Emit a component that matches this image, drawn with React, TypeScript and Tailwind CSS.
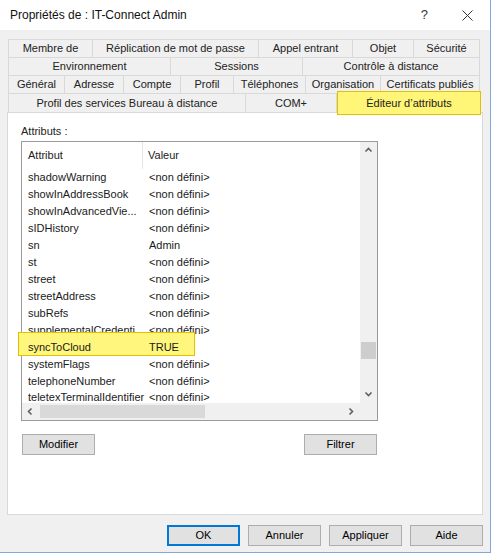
import React from "react"

type Tab = { label: string; w: string; selected?: boolean }

const tabRows: Tab[][] = [
  [
    { label: "Membre de", w: "w-[84px]" },
    { label: "Réplication de mot de passe", w: "w-[166px]" },
    { label: "Appel entrant", w: "w-[94px]" },
    { label: "Objet", w: "w-[61px]" },
    { label: "Sécurité", w: "w-[67px]" },
  ],
  [
    { label: "Environnement", w: "w-[162px]" },
    { label: "Sessions", w: "w-[132px]" },
    { label: "Contrôle à distance", w: "w-[178px]" },
  ],
  [
    { label: "Général", w: "w-[56px]" },
    { label: "Adresse", w: "w-[59px]" },
    { label: "Compte", w: "w-[57px]" },
    { label: "Profil", w: "w-[53px]" },
    { label: "Téléphones", w: "w-[72px]" },
    { label: "Organisation", w: "w-[75px]" },
    { label: "Certificats publiés", w: "w-[100px]" },
  ],
  [
    { label: "Profil des services Bureau à distance", w: "w-[237px]" },
    { label: "COM+", w: "w-[91px]" },
    { label: "Éditeur d’attributs", w: "w-[144px]", selected: true },
  ],
]

const attributes: [string, string][] = [
  ["shadowWarning", "<non défini>"],
  ["showInAddressBook", "<non défini>"],
  ["showInAdvancedVie...", "<non défini>"],
  ["sIDHistory", "<non défini>"],
  ["sn", "Admin"],
  ["st", "<non défini>"],
  ["street", "<non défini>"],
  ["streetAddress", "<non défini>"],
  ["subRefs", "<non défini>"],
  ["supplementalCredenti...", "<non défini>"],
  ["syncToCloud", "TRUE"],
  ["systemFlags", "<non défini>"],
  ["telephoneNumber", "<non défini>"],
  ["teletexTerminalIdentifier", "<non défini>"],
]

const Chevron = ({ dir }: { dir: "up" | "down" | "left" | "right" }) => {
  const d = {
    up: "M1.5 5.5 L4.5 2.5 L7.5 5.5",
    down: "M1.5 2.5 L4.5 5.5 L7.5 2.5",
    left: "M5.5 1.5 L2.5 4.5 L5.5 7.5",
    right: "M2.5 1.5 L5.5 4.5 L2.5 7.5",
  }[dir]
  return (
    <svg width="9" height="9" viewBox="0 0 9 9">
      <path d={d} fill="none" stroke="#606060" strokeWidth="1.6" />
    </svg>
  )
}

const Button = ({ label, focused }: { label: string; focused?: boolean }) => (
  <div
    className={`w-[73px] h-[21px] flex items-center justify-center bg-[#e1e1e1] border ${
      focused ? "border-[#0078d7] border-2" : "border-[#adadad]"
    }`}
  >
    {label}
  </div>
)

export default function App() {
  return (
    <div className="w-[493px] h-[554px] bg-white font-['Liberation_Sans',Arial,sans-serif] text-[11px] text-black">
      <div className="w-[491px] h-[553px] flex flex-col bg-[#f0f0f0] border-r border-b border-[#7fa9d8]">
        {/* Title bar */}
        <div className="h-[30px] bg-white flex items-center pl-[10px] shrink-0">
          <span className="text-[12px] text-[#111]">Propriétés de : IT-Connect Admin</span>
          <span className="ml-auto text-[13px] text-[#333] mr-[34px]">?</span>
          <svg width="11" height="11" viewBox="0 0 11 11" className="mr-[17px]">
            <path d="M0.5 0.5 L10.5 10.5 M10.5 0.5 L0.5 10.5" stroke="#333" strokeWidth="1" />
          </svg>
        </div>

        <div className="flex flex-col pl-[7px] pt-[9px]">
          {/* Tabs */}
          <div className="ml-[1px] w-[472px] flex flex-col">
            {tabRows.map((row, ri) => (
              <div key={ri} className={`flex ${ri === 3 ? "h-[19px]" : "h-[18px]"}`}>
                {row.map((tab, ti) => (
                  <div
                    key={tab.label}
                    className={`${tab.w} relative flex items-center justify-center border-t border-l border-[#d9d9d9] ${
                      ti === row.length - 1 ? "border-r" : ""
                    } text-[#222]`}
                  >
                    {tab.selected ? (
                      <div className="absolute -top-[3px] -bottom-[3px] left-0 -right-[2px] bg-[#fff576] border border-[#e2c200] flex items-center justify-center z-10">
                        {tab.label}
                      </div>
                    ) : (
                      tab.label
                    )}
                  </div>
                ))}
              </div>
            ))}
          </div>

          {/* Tab page */}
          <div className="w-[476px] h-[403px] bg-white border border-[#d9d9d9] flex flex-col pl-[13px]">
            <div className="mt-[11px] h-[14px] leading-[14px] text-[#222]">Attributs :</div>

            {/* List box */}
            <div className="mt-[3px] w-[357px] h-[280px] border border-[#9a9a9a] flex flex-col">
              <div className="flex h-[261px]">
                <div className="w-[338px] flex flex-col">
                  <div className="h-[27px] flex shrink-0">
                    <div className="w-[121px] pl-[6px] flex items-center border-r border-[#e5e5e5] text-[#222]">
                      Attribut
                    </div>
                    <div className="pl-[5px] flex items-center text-[#222]">Valeur</div>
                  </div>
                  {attributes.map(([name, value], i) => {
                    const last = i === attributes.length - 1
                    return (
                      <div
                        key={name}
                        className={`relative flex shrink-0 ${
                          last ? "h-[13px] leading-[15px] overflow-hidden" : "h-[17px] leading-[17px]"
                        }`}
                      >
                        {name === "syncToCloud" && (
                          <div className="absolute -left-[4px] -top-[7px] w-[177px] h-[24px] bg-[#fff67e] border border-[#e3c100]" />
                        )}
                        <div className="relative w-[121px] pl-[6px] whitespace-nowrap text-[#1a1a1a]">
                          {name}
                        </div>
                        <div className="relative pl-[6px] whitespace-nowrap text-[#1a1a1a]">
                          {value}
                        </div>
                      </div>
                    )
                  })}
                </div>
                {/* Vertical scrollbar */}
                <div className="w-[17px] bg-[#f0f0f0] flex flex-col">
                  <div className="h-[17px] flex items-center justify-center">
                    <Chevron dir="up" />
                  </div>
                  <div className="flex-1 flex flex-col">
                    <div className="mt-[183px] mx-[1px] h-[17px] bg-[#cdcdcd]" />
                  </div>
                  <div className="h-[17px] flex items-center justify-center">
                    <Chevron dir="down" />
                  </div>
                </div>
              </div>
              {/* Horizontal scrollbar */}
              <div className="flex h-[17px] bg-[#f0f0f0]">
                <div className="w-[17px] flex items-center justify-center">
                  <Chevron dir="left" />
                </div>
                <div className="w-[304px] flex items-center">
                  <div className="ml-[1px] w-[165px] h-[13px] bg-[#d9d9d9]" />
                </div>
                <div className="w-[17px] flex items-center justify-center">
                  <Chevron dir="right" />
                </div>
                <div className="w-[17px]" />
              </div>
            </div>

            <div className="mt-[13px] ml-[1px] w-[355px] flex justify-between">
              <Button label="Modifier" />
              <Button label="Filtrer" />
            </div>
          </div>

          {/* Dialog buttons */}
          <div className="mt-[10px] w-[476px] flex justify-end gap-[8px]">
            <Button label="OK" focused />
            <Button label="Annuler" />
            <Button label="Appliquer" />
            <Button label="Aide" />
          </div>
        </div>
      </div>
    </div>
  )
}
